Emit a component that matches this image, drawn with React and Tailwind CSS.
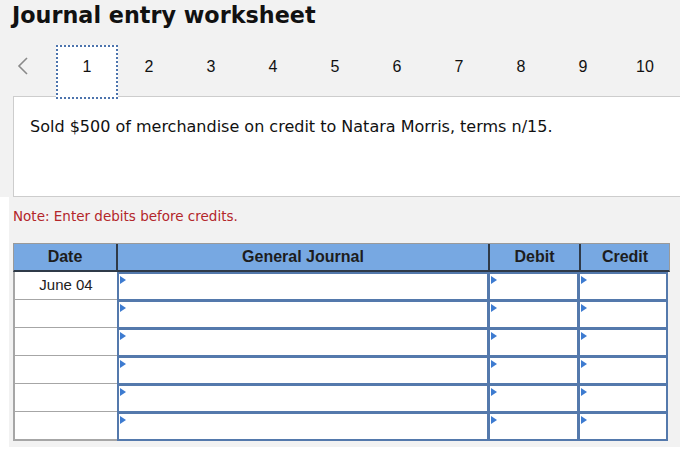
import React from "react";

const inputCols = ["w-[372px]", "w-[91px]", "w-[90px]"];

function Flag() {
  return (
    <span className="absolute left-[1px] top-[2px] w-0 h-0 border-y-[4px] border-y-transparent border-l-[6px] border-l-[#3d7bd0]" />
  );
}

export default function App() {
  const tabs = [1, 2, 3, 4, 5, 6, 7, 8, 9, 10];
  const rows = ["June 04", "", "", "", "", ""];
  return (
    <div className="w-[700px] h-[462px] bg-white">
      <div className="w-[680px] bg-[#f2f2f2]">
        <h1
          className="pl-[12px] pt-[1px] text-[22.3px] leading-[28px] font-bold text-[#111]"
          style={{ fontFamily: '"DejaVu Sans", Verdana, sans-serif' }}
        >
          Journal entry worksheet
        </h1>
        <div
          className="relative z-10 flex items-start mt-[16px] h-[54px]"
          style={{ fontFamily: '"Liberation Sans", Arial, sans-serif' }}
        >
          <div className="w-[56px] pl-[17px] pt-[12px] flex items-center">
            <svg width="12" height="18" viewBox="0 0 12 18">
              <path d="M10 1 L2 9 L10 17" fill="none" stroke="#8a8a8a" strokeWidth="1.6" />
            </svg>
          </div>
          {tabs.map((t) => (
            <div
              key={t}
              className={
                t === 1
                  ? "w-[62px] h-[54px] flex justify-center pt-[10px] text-[16px] leading-[20px] text-[#111] bg-white border-2 border-dotted border-[#4d74ad]"
                  : "w-[62px] h-[54px] flex justify-center pt-[12px] text-[16px] leading-[20px] text-[#111]"
              }
            >
              {t}
            </div>
          ))}
        </div>
        <div className="flex">
          <div className="w-[13px]" />
          <div
            className="-mt-[3px] flex-1 h-[101px] bg-white border border-[#cdcdcd] border-r-0 pl-[16px] pt-[19px] text-[16px] leading-[22px] text-[#111]"
            style={{ fontFamily: '"DejaVu Sans", Verdana, sans-serif' }}
          >
            Sold $500 of merchandise on credit to Natara Morris, terms n/15.
          </div>
        </div>
      </div>
      <div className="ml-[9px] w-[671px] bg-[#f2f2f2] pl-[4px] pt-[9px] pb-[6px]">
        <div
          className="text-[13.5px] leading-[20px] text-[#b3262a]"
          style={{ fontFamily: '"DejaVu Sans", Verdana, sans-serif' }}
        >
          Note: Enter debits before credits.
        </div>
        <div
          className="mt-[17px] w-[657px]"
          style={{ fontFamily: '"Liberation Sans", Arial, sans-serif' }}
        >
          <div className="flex h-[29px] bg-[#77a8e2] border-t border-l border-r border-[#9a9a9a] border-b-2 border-b-[#2f3a48] text-[16px] font-bold text-[#1d1d1d]">
            <div className="w-[104px] flex items-center justify-center border-r-2 border-[#2f3a48]">Date</div>
            <div className="w-[372px] flex items-center justify-center border-r-2 border-[#2f3a48]">General Journal</div>
            <div className="w-[91px] flex items-center justify-center border-r-2 border-[#2f3a48]">Debit</div>
            <div className="flex-1 flex items-center justify-center">Credit</div>
          </div>
          {rows.map((d, i) => (
            <div key={i} className={i === 0 ? "flex h-[29px]" : "flex h-[29px] -mt-px"}>
              <div className="w-[104px] bg-white border-2 border-t-0 border-r-0 border-[#a6a6a6] flex items-center justify-center text-[15px] text-[#222]">
                {d}
              </div>
              {inputCols.map((w, j) => (
                <div
                  key={j}
                  className={
                    (j === 0 ? "" : "-ml-px ") +
                    w +
                    " relative bg-white border-2 border-[#5479ac]"
                  }
                >
                  <Flag />
                </div>
              ))}
            </div>
          ))}
        </div>
      </div>
    </div>
  );
}
